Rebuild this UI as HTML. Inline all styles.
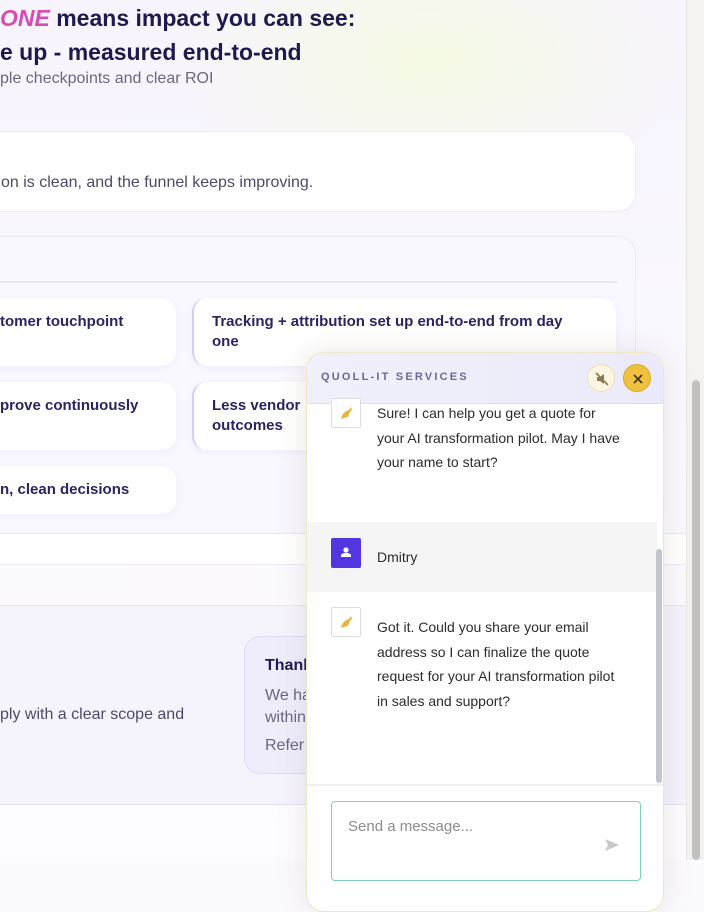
<!DOCTYPE html>
<html><head><meta charset="utf-8"><style>
*{box-sizing:border-box;margin:0;padding:0}
body{width:704px;height:860px;overflow:hidden;position:relative;font-family:"Liberation Sans",sans-serif;background:#fbfaff}
.bg{position:absolute;left:0;top:0;width:686px;height:860px;background:radial-gradient(ellipse 260px 140px at 430px 60px,#f6fbe4 0%,rgba(246,251,228,0) 100%),linear-gradient(180deg,#f7f4fd 0%,#faf8ff 40%,#fdfcff 100%)}
.h1{position:absolute;left:0;font-weight:bold;font-size:23px;color:#1e1a4d;white-space:nowrap}
.sub{position:absolute;left:0;top:70px;font-size:16px;color:#6a6780}
.card{position:absolute;background:#fff;border:1px solid #ede8fb;border-radius:18px}
.pill{position:absolute;background:#fff;border-radius:14px;box-shadow:0 2px 8px rgba(150,130,220,.08);font-size:15px;font-weight:bold;color:#2a2560;line-height:20px;padding:14px 18px}
.pl{border-left:2px solid #d8ccfa}
.track{position:absolute;left:686px;top:0;width:18px;height:860px;background:#f4f3f1;border-left:1px solid #e8e6e3}
.thumb{position:absolute;left:692px;top:380px;width:8px;height:480px;background:#c2c2c2;border-radius:4px}
.chat{position:absolute;left:306px;top:352px;width:358px;height:560px;background:#fff;border:1px solid #f0e7c8;border-radius:18px;overflow:hidden;box-shadow:0 0 30px rgba(120,100,80,.15)}
.hdr{height:51px;background:linear-gradient(90deg,#f0f0fb,#ebeafa);border-bottom:1px solid #dedcf2;position:relative}
.hdr span{position:absolute;left:14px;top:18px;font-size:11px;letter-spacing:2.2px;font-weight:bold;color:#6a6a98}
.btn{position:absolute;top:11px;width:28px;height:28px;border-radius:50%}
.msg{position:absolute;left:70px;font-size:14px;color:#2c2c2c;line-height:24.5px;width:250px}
.av{position:absolute;left:24px;width:30px;height:30px;border:1px solid #ddd;border-radius:2px;background:#fff}
</style></head><body>
<div class="bg"></div>
<div class="h1" style="top:5px"><span style="font-style:italic;color:#d64cb5">ONE</span> means impact you can see:</div>
<div class="h1" style="top:39px">e up - measured end-to-end</div>
<div class="sub">ple checkpoints and clear ROI</div>
<div class="card" style="left:-20px;top:131px;width:656px;height:81px"><div style="position:absolute;left:20px;top:42px;font-size:16px;color:#4d4a66">on is clean, and the funnel keeps improving.</div></div>
<div class="card" style="left:-20px;top:236px;width:656px;height:300px;background:#f9f7ff"></div>
<div style="position:absolute;left:0;top:281px;width:617px;height:2px;background:#ece6fb"></div>
<div class="pill" style="left:-20px;top:298px;width:196px;height:68px;padding-left:20px">tomer touchpoint</div>
<div class="pill pl" style="left:192px;top:298px;width:424px;height:68px;padding-right:30px">Tracking + attribution set up end-to-end from day one</div>
<div class="pill" style="left:-20px;top:382px;width:196px;height:68px;padding-left:20px">prove continuously</div>
<div class="pill pl" style="left:192px;top:382px;width:424px;height:68px">Less vendor<br>outcomes</div>
<div class="pill" style="left:-20px;top:466px;width:196px;height:48px;padding-left:20px">n, clean decisions</div>
<div style="position:absolute;left:0;top:533px;width:686px;height:32px;background:#fff;border-top:1px solid #efeaf9;border-bottom:1px solid #efeaf9"></div>
<div style="position:absolute;left:0;top:605px;width:686px;height:200px;background:#f5f3fc;border-top:1px solid #ebe7f7;border-bottom:1px solid #e4e0f5"></div>
<div style="position:absolute;left:0;top:706px;font-size:16px;color:#4d4a66">ply with a clear scope and</div>
<div style="position:absolute;left:244px;top:636px;width:120px;height:138px;background:#efedfc;border:1px solid #e0dcf6;border-radius:16px">
<div style="position:absolute;left:20px;top:20px;font-weight:bold;font-size:16px;color:#1e1a4d">Thank</div>
<div style="position:absolute;left:20px;top:48px;font-size:16px;line-height:22px;color:#6a6780">We have<br>within<div style="margin-top:6px">Refer</div></div></div>
<div class="track"></div><div class="thumb"></div>
<div class="chat">
<div class="hdr"><span>QUOLL-IT SERVICES</span>
<div class="btn" style="left:280px;background:#fbf6e4;border:1px solid #eadfb8"><svg width="28" height="28" viewBox="0 0 28 28"><path d="M9 12h3l4-3v10l-4-3H9z" fill="#8a7a4a"/><path d="M8 8l12 12" stroke="#8a7a4a" stroke-width="1.6"/></svg></div>
<div class="btn" style="left:316px;background:#eec23e;border:1px solid #d9aa22"><svg width="28" height="28" viewBox="0 0 28 28"><path d="M10 10l8 8M18 10l-8 8" stroke="#3a2c00" stroke-width="1.6"/></svg></div></div>
<div class="av" style="top:45px"><svg width="28" height="28"><path d="M9 20c1-5 4-8 8-9l2-3 1 3c-2 1-3 4-4 7-2 0-4 1-7 2z" fill="#e9b43a"/></svg></div>
<div class="msg" style="top:48px;width:280px">Sure! I can help you get a quote for<br>your AI transformation pilot. May I have<br>your name to start?</div>
<div style="position:absolute;left:0;top:169px;width:350px;height:70px;background:#f5f5f5"></div>
<div style="position:absolute;left:24px;top:185px;width:30px;height:30px;background:#5336e0;border-radius:2px"><svg width="30" height="30"><circle cx="15" cy="12" r="2.6" fill="#fff"/><path d="M10 19h10v-1.5c0-1.5-2-2.5-5-2.5s-5 1-5 2.5z" fill="#fff"/></svg></div>
<div class="msg" style="top:192px">Dmitry</div>
<div class="av" style="top:254px"><svg width="28" height="28"><path d="M9 20c1-5 4-8 8-9l2-3 1 3c-2 1-3 4-4 7-2 0-4 1-7 2z" fill="#e9b43a"/></svg></div>
<div class="msg" style="top:262px">Got it. Could you share your email address so I can finalize the quote request for your AI transformation pilot in sales and support?</div>
<div style="position:absolute;left:349px;top:196px;width:6px;height:234px;background:#c4c4cc;border-radius:3px"></div>
<div style="position:absolute;left:0;top:431px;width:358px;height:2px;background:#efefef"></div>
<div style="position:absolute;left:24px;top:448px;width:310px;height:80px;border:1px solid #7fd0b4;border-radius:4px"><div style="position:absolute;left:16px;top:16px;font-size:15px;color:#8c8c8c">Send a message...</div>
<svg style="position:absolute;left:272px;top:36px" width="16" height="14"><path d="M1 1l14 6-14 6 3-6z" fill="#c8c8c8"/></svg></div>
</div>
</body></html>
